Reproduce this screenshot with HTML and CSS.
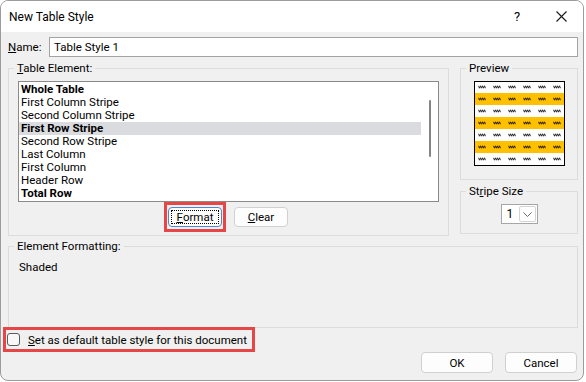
FILE: index.html
```html
<!DOCTYPE html>
<html>
<head>
<meta charset="utf-8">
<link rel="stylesheet" href="styles.css">
</head>
<body>
<div class="window">
  <div class="titlebar">
    <span class="title">New Table Style</span>
    <span class="tb-help">?</span>
    <span class="tb-close"><svg width="11" height="11" viewBox="0 0 11 11"><path d="M0.5 0.5 L10.5 10.5 M10.5 0.5 L0.5 10.5" stroke="#1a1a1a" stroke-width="1.1" fill="none"/></svg></span>
  </div>
  <div class="content">
    <div class="name-row">
      <label class="name-label"><u>N</u>ame:</label>
      <div class="name-input">Table Style 1</div>
    </div>
    <div class="top">
      <section class="group elements-group">
        <div class="group-title"><u>T</u>able Element:</div>
        <div class="listbox">
          <ul class="items">
            <li class="b">Whole Table</li>
            <li>First Column Stripe</li>
            <li>Second Column Stripe</li>
            <li class="b sel">First Row Stripe</li>
            <li>Second Row Stripe</li>
            <li>Last Column</li>
            <li>First Column</li>
            <li>Header Row</li>
            <li class="b">Total Row</li>
          </ul>
          <div class="scrollbar"><div class="thumb"></div></div>
        </div>
        <div class="list-buttons">
          <div class="highlight"><button class="btn btn-focus"><span class="focus-ring"><u>F</u>ormat</span></button></div>
          <button class="btn"><u>C</u>lear</button>
        </div>
      </section>
      <div class="side">
        <section class="group preview-group">
          <div class="group-title">Preview</div>
          <svg class="preview" width="91" height="85" viewBox="0 0 91 85">
            <defs>
              <pattern id="mk" x="4" y="0" width="15" height="12" patternUnits="userSpaceOnUse">
                <path d="M0.5 4.8 L1.5 7.2 L2.5 4.8 L3.5 7.2 L4.5 4.8 L5.5 7.2 L6.5 4.8 L7.5 7.2" stroke="#000" stroke-width="0.8" fill="none"/>
              </pattern>
            </defs>
            <rect x="0" y="0" width="91" height="85" fill="#fff"/>
            <rect x="0" y="12" width="91" height="12" fill="#ffc000"/>
            <rect x="0" y="36" width="91" height="12" fill="#ffc000"/>
            <rect x="0" y="60" width="91" height="12" fill="#ffc000"/>
            <rect x="1" y="0" width="89" height="84" fill="url(#mk)"/>
            <rect x="0.5" y="0.5" width="90" height="84" fill="none" stroke="#000" stroke-width="1"/>
          </svg>
        </section>
        <section class="group stripe-group">
          <div class="group-title">St<u>r</u>ipe Size</div>
          <div class="combo">
            <span class="combo-value">1</span>
            <span class="combo-btn"><svg width="9" height="5" viewBox="0 0 9 5"><path d="M0.5 0.5 L4.5 4.5 L8.5 0.5" stroke="#6b6b6b" stroke-width="1" fill="none"/></svg></span>
          </div>
        </section>
      </div>
    </div>
    <section class="group format-group">
      <div class="group-title">Element Formatting:</div>
      <div class="shaded">Shaded</div>
    </section>
    <div class="check-row">
      <span class="checkbox"></span>
      <span class="check-label"><u>S</u>et as default table style for this document</span>
    </div>
    <div class="footer">
      <button class="btn btn-wide">OK</button>
      <button class="btn btn-wide">Cancel</button>
    </div>
  </div>
</div>
</body>
</html>
```

FILE: styles.css
```css
* { box-sizing: border-box; }
html, body { margin: 0; padding: 0; }
body {
  background: #ffffff;
  width: 586px;
  height: 382px;
  overflow: hidden;
  font-family: Roboto, "Noto Sans", sans-serif;
  font-size: 11.5px;
  color: #000;
}
u { text-underline-offset: 1px; }

.window {
  width: 584px;
  height: 381px;
  border: 1px solid #9c9c9c;
  border-radius: 8px;
  background: #f0f0f0;
  overflow: hidden;
  display: flex;
  flex-direction: column;
}

.titlebar {
  height: 31px;
  flex: none;
  background: #fff;
  display: flex;
  align-items: center;
  padding-left: 8px;
  padding-right: 12px;
}
.title { font-size: 12px; }
.tb-help {
  margin-left: auto;
  width: 20px;
  text-align: center;
  font-size: 13px;
}
.tb-close {
  margin-left: 24px;
  width: 20px;
  display: flex;
  justify-content: center;
}
.tb-close svg { display: block; }

.content {
  flex: 1;
  display: flex;
  flex-direction: column;
  padding: 5px 5px 0 7px;
}
.content > * { flex-shrink: 0; }

.name-row {
  display: flex;
  align-items: center;
  height: 20px;
}
.name-label { width: 41px; }
.name-input {
  flex: 1;
  height: 20px;
  border: 1px solid #a3a3a3;
  background: #fff;
  padding-left: 4px;
  line-height: 18px;
}

/* group boxes: a bordered box whose caption sits over its top edge */
.group {
  border: 1px solid #dcdcdc;
  flex-shrink: 0;
}
.group-title {
  width: fit-content;
  height: 14px;
  line-height: 14px;
  margin: -8px 0 0 5px;
  padding: 0 3px;
  background: #f0f0f0;
  white-space: nowrap;
}

.top {
  display: flex;
  align-items: flex-start;
  gap: 11px;
  margin-top: 11px;
}

.elements-group {
  width: 441px;
  height: 168px;
}
.listbox {
  margin: 6px 0 0 9px;
  width: 421px;
  height: 121px;
  border: 1px solid #8a8a8a;
  background: #fff;
  display: flex;
}
.items {
  width: 402px;
  margin: 0;
  padding: 1px 0 0 0;
  list-style: none;
}
.items li {
  line-height: 13px;
  height: 13px;
  padding-left: 2px;
  white-space: nowrap;
}
.items li.b { font-weight: bold; }
.items li.sel { background: #dadbdf; }
.scrollbar { width: 17px; }
.thumb {
  width: 2px;
  height: 57px;
  margin-top: 18px;
  margin-left: 8px;
  background: #858585;
  border-radius: 1px;
}

.list-buttons {
  margin-left: 9px;
  width: 421px;
  display: flex;
  justify-content: center;
  align-items: center;
  gap: 8px;
  padding-right: 5px;
}
.highlight {
  border: 3px solid #e64646;
  padding: 2px 1px;
}
.btn {
  width: 54px;
  height: 20px;
  border: 1px solid #d0d0d0;
  border-radius: 4px;
  background: #fdfdfd;
  font: inherit;
  color: #000;
  padding: 0;
  display: flex;
  align-items: center;
  justify-content: center;
  flex-shrink: 0;
}
.btn-focus {
  border-color: #4a88d6;
  padding: 2px;
}
.focus-ring {
  flex: 1;
  align-self: stretch;
  border: 1px dotted #000;
  display: flex;
  align-items: center;
  justify-content: center;
}

.side {
  width: 120px;
  display: flex;
  flex-direction: column;
}
.preview-group {
  height: 112px;
}
.preview { display: block; margin: 6px auto 0; }
.stripe-group {
  margin-top: 11px;
  height: 43px;
}
.combo {
  width: 37px;
  height: 20px;
  margin: 6px auto 0;
  border: 1px solid #a6a6a6;
  background: #fff;
  display: flex;
  align-items: center;
}
.combo-value { padding-left: 5px; font-size: 12px; }
.combo-btn {
  margin-left: auto;
  margin-right: 1px;
  width: 17px;
  height: 16px;
  border: 1px solid #d4d4d4;
  border-radius: 2px;
  display: flex;
  align-items: center;
  justify-content: center;
}
.combo-btn svg { display: block; }

.format-group {
  margin-top: 10px;
  height: 82px;
}
.shaded { margin: 7px 0 0 10px; line-height: 14px; }

.check-row {
  align-self: flex-start;
  margin-top: -1px;
  margin-left: -5px;
  width: 252px;
  height: 25px;
  border: 3px solid #e64646;
  padding-left: 1px;
  display: flex;
  align-items: center;
}
.checkbox {
  width: 13px;
  height: 13px;
  flex-shrink: 0;
  border: 1px solid #5c5c5c;
  border-radius: 3px;
  background: #f8f8f8;
}
.check-label { margin-left: 8px; white-space: nowrap; }

.footer {
  display: flex;
  justify-content: flex-end;
  gap: 12px;
  padding-right: 1px;
}
.btn-wide {
  width: 72px;
  height: 21px;
}
```
